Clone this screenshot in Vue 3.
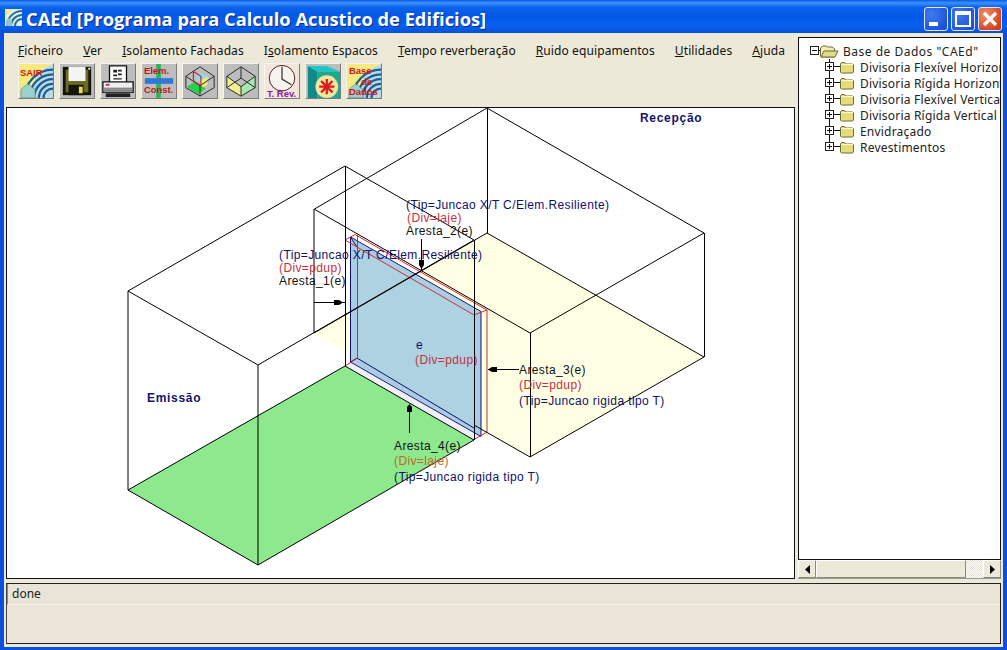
<script setup>
const menus = [
  { before: '', key: 'F', after: 'icheiro' },
  { before: '', key: 'V', after: 'er' },
  { before: '', key: 'I', after: 'solamento Fachadas' },
  { before: 'I', key: 's', after: 'olamento Espacos' },
  { before: '', key: 'T', after: 'empo reverberação' },
  { before: '', key: 'R', after: 'uido equipamentos' },
  { before: '', key: 'U', after: 'tilidades' },
  { before: '', key: 'A', after: 'juda' },
]

const treeItems = [
  'Divisoria Flexível Horizontal',
  'Divisoria Rígida Horizontal',
  'Divisoria Flexível Vertical',
  'Divisoria Rígida Vertical',
  'Envidraçado',
  'Revestimentos',
]

const labels = [
  { x: 406, y: 209, cls: 'tip', text: '(Tip=Juncao X/T C/Elem.Resiliente)' },
  { x: 407, y: 222, cls: 'div', text: '(Div=laje)' },
  { x: 406, y: 235, cls: 'ar', text: 'Aresta_2(e)' },
  { x: 279, y: 259, cls: 'tip', text: '(Tip=Juncao X/T C/Elem.Resiliente)' },
  { x: 279, y: 272, cls: 'div', text: '(Div=pdup)' },
  { x: 279, y: 285, cls: 'ar', text: 'Aresta_1(e)' },
  { x: 416, y: 349, cls: 'tip', text: 'e' },
  { x: 415, y: 364, cls: 'div', text: '(Div=pdup)' },
  { x: 519, y: 374, cls: 'ar', text: 'Aresta_3(e)' },
  { x: 519, y: 389, cls: 'div', text: '(Div=pdup)' },
  { x: 519, y: 405, cls: 'tip', text: '(Tip=Juncao rigida tipo T)' },
  { x: 394, y: 450, cls: 'ar', text: 'Aresta_4(e)' },
  { x: 394, y: 465, cls: 'div2', text: '(Div=laje)' },
  { x: 394, y: 481, cls: 'tip', text: '(Tip=Juncao rigida tipo T)' },
]
</script>

<template>
  <div class="window">
    <div class="titlebar">
      <svg class="app-icon" width="17" height="17" viewBox="0 0 17 17">
        <rect width="17" height="17" fill="#e8f0d8" />
        <path d="M0 0h8L0 8z" fill="#f2e88a" />
        <path d="M2 17A15 15 0 0 1 17 2M6 17A11 11 0 0 1 17 6M10 17A7 7 0 0 1 17 10" fill="none" stroke="#1f6fa8" stroke-width="2" />
        <path d="M1 17v-5l3-3 3 3v5z" fill="#8fc6c6" />
      </svg>
      <span class="title">CAEd [Programa para Calculo Acustico de Edificios]</span>
      <div class="caption-btns">
        <div class="cap-btn">
          <svg width="24" height="24" viewBox="0 0 24 24"><rect x="5" y="15" width="9" height="4" fill="#fff" /></svg>
        </div>
        <div class="cap-btn">
          <svg width="24" height="24" viewBox="0 0 24 24"><path d="M5 5h14v14H5z M5 5v2h14" fill="none" stroke="#fff" stroke-width="2" /></svg>
        </div>
        <div class="cap-btn close">
          <svg width="24" height="24" viewBox="0 0 24 24"><path d="M6 6l12 12M18 6L6 18" stroke="#fff" stroke-width="3.2" /></svg>
        </div>
      </div>
    </div>

    <div class="client">
      <div class="work">
        <div class="left">
          <div class="menu">
            <span v-for="m in menus" :key="m.key + m.after">{{ m.before }}<u>{{ m.key }}</u>{{ m.after }}</span>
          </div>

          <div class="toolbar">
            <!-- sair -->
            <svg class="tool" viewBox="0 0 36 36">
              <rect width="36" height="36" fill="#f4ea80" />
              <path d="M36 0V36H12C12 20 20 6 36 0z" fill="#b9dbe6" />
              <path d="M6 36A30 30 0 0 1 36 6M11 36A25 25 0 0 1 36 11M16 36A20 20 0 0 1 36 16M21 36A15 15 0 0 1 36 21M26 36A10 10 0 0 1 36 26" fill="none" stroke="#1c5f96" stroke-width="2.400" />
              <path d="M2 36V27l7-6 8 6v9z" fill="#9ccfcf" stroke="#4a7a8a" stroke-width="0.600" />
              <text x="1" y="13" class="ic-txt" fill="#d4161a">SAIR</text>
            </svg>
            <!-- disquete -->
            <svg class="tool" viewBox="0 0 36 36">
              <rect width="36" height="36" fill="#bdbdbd" />
              <path d="M3 3h30v30H3z" fill="#161608" />
              <path d="M6 6h24v24H6z" fill="#6b6b25" />
              <rect x="9" y="3" width="18" height="15" fill="#f4f4f4" />
              <rect x="9" y="22" width="16" height="11" fill="#161608" />
              <rect x="20" y="24" width="4" height="7" fill="#e8d95c" />
              <rect x="30" y="4" width="2" height="2" fill="#fff" />
            </svg>
            <!-- impressora -->
            <svg class="tool" viewBox="0 0 36 36">
              <rect width="36" height="36" fill="#bdbdbd" />
              <path d="M9 2h18v18H9z" fill="#fff" stroke="#111" stroke-width="1.400" />
              <path d="M13 6h4v3h-4zM13 11h4v2h-4zM18 6h4v2h-4zM18 10h4v2h-4zM13 15h9v1.500h-9z" fill="#222" />
              <path d="M2 19h32v11H2z" fill="#efefef" stroke="#111" stroke-width="1.400" />
              <path d="M3 25h30v5H3z" fill="#8c8c8c" />
              <path d="M5 31h26v4H5z" fill="#222" />
              <rect x="5" y="21" width="4" height="2" fill="#b03050" />
            </svg>
            <!-- elementos construtivos -->
            <svg class="tool" viewBox="0 0 36 36">
              <rect width="36" height="36" fill="#bdbdbd" />
              <rect x="15" y="0" width="5" height="36" fill="#32b25e" />
              <rect x="3" y="15" width="30" height="6" fill="#2f77d8" />
              <text x="2" y="11" class="ic-txt" fill="#c01420">Elem.</text>
              <text x="2" y="31" class="ic-txt" fill="#c01420">Const.</text>
            </svg>
            <!-- cubo colorido -->
            <svg class="tool" viewBox="0 0 36 36">
              <rect width="36" height="36" fill="#bdbdbd" />
              <path d="M18 27l8-5v-9l-8 5z" fill="#f1ea7d" />
              <path d="M18 18l8-5-8-4-4 2v9z" fill="#8fdde8" />
              <path d="M4 24l8-5 12 7-8 6z" fill="#22d24a" />
              <path d="M3 13L18 3l15 10v12L18 34 3 25zM3 13l15 10 15-10M18 23v11" fill="none" stroke="#222" stroke-width="1" />
              <path d="M11 8l8 5v10l-8-5zM11 8v10" fill="none" stroke="#d41a2a" stroke-width="1.200" />
            </svg>
            <!-- caixa -->
            <svg class="tool" viewBox="0 0 36 36">
              <rect width="36" height="36" fill="#bdbdbd" />
              <path d="M3 13l15 11v10L3 25z" fill="#f2ee90" />
              <path d="M18 24l15-11v12L18 34z" fill="#a8e8b0" />
              <path d="M3 13L18 3l15 10-15 11zM3 13v12l15 9 15-9V13M18 24v10M18 3v12M3 25l15-10 15 10" fill="none" stroke="#222" stroke-width="1" />
            </svg>
            <!-- relogio -->
            <svg class="tool" viewBox="0 0 36 36">
              <rect width="36" height="36" fill="#f2e6dc" />
              <circle cx="18" cy="15" r="13.500" fill="#f8f3ee" stroke="#4a1a1a" stroke-width="1" />
              <path d="M18 3v13l10 6" fill="none" stroke="#333" stroke-width="1.300" />
              <text x="2" y="35" class="ic-txt" fill="#8a1a9a">T. Rev.</text>
            </svg>
            <!-- ruido -->
            <svg class="tool" viewBox="0 0 36 36">
              <rect width="36" height="36" fill="#bdbdbd" />
              <path d="M2 2l10 6v28H2z" fill="#0f8a86" />
              <path d="M2 2h20l14 6H12z" fill="#19c8c8" />
              <path d="M12 8h24v28H12z" fill="#1fa88e" />
              <circle cx="22" cy="24" r="12" fill="#f0e6a0" />
              <path d="M22 16v16M14 24h16M16 18l12 12M28 18L16 30" stroke="#e01818" stroke-width="2.400" />
            </svg>
            <!-- base de dados -->
            <svg class="tool" viewBox="0 0 36 36">
              <rect width="36" height="36" fill="#f4ea80" />
              <path d="M36 0V36H12C12 20 20 6 36 0z" fill="#b9dbe6" />
              <path d="M6 36A30 30 0 0 1 36 6M11 36A25 25 0 0 1 36 11M16 36A20 20 0 0 1 36 16M21 36A15 15 0 0 1 36 21M26 36A10 10 0 0 1 36 26" fill="none" stroke="#1c5f96" stroke-width="2.400" />
              <path d="M2 36V27l7-6 8 6v9z" fill="#9ccfcf" stroke="#4a7a8a" stroke-width="0.600" />
              <text x="2" y="11" class="ic-txt" fill="#c8141a">Base</text>
              <text x="15" y="22" class="ic-txt" fill="#c8141a">de</text>
              <text x="2" y="33" class="ic-txt" fill="#c8141a">Dados</text>
            </svg>
          </div>

          <div class="canvas">
            <svg class="diagram" viewBox="7 108 787 470" width="787" height="470">
              <polygon points="314,333 487,233 704,357 530,457" fill="#ffffe3" />
              <polygon points="128,490 258,565 474,440 345,366" fill="#8ee88e" />

              <!-- parede -->
              <polygon points="345,366 474,440 481,436 350,361" fill="#f0f0fb" />
              <polygon points="350,237 481,312 481,436 350,361" fill="#a9cde2" />
              <polygon points="357,247 474,314 474,428 357,358" fill="#add3e3" />
              <g fill="none" stroke="#10106a">
                <path d="M350.500 237V362L481 436.500V311.500z" />
                <path d="M350.500 362L357 358L474 428M474.500 316V439" />
                <path d="M350.500 237L357 247" />
              </g>
              <g fill="none" stroke="#d02c38">
                <path d="M345 240L355 234.500L487 310V432L475 439" />
                <path d="M345 240L357 247L474 315L487 310" />
                <path d="M357.500 235V358L345 366" />
              </g>

              <g fill="none" stroke="#000">
                <path d="M128 291L345 166L474 240" />
                <path d="M128 291L258 365L474 240" />
                <path d="M128 291V490L258 565V365" />
                <path d="M128 490L345 366L474 440L258 565" />
                <path d="M345.500 166V366" />
                <path d="M474.500 240V440" />
                <path d="M314.500 209L487 108L704 233L530 333L314 209V333" />
                <path d="M487.500 108V233" />
                <path d="M314 333L487 233L704 357L530 457L474 425" />
                <path d="M530.500 333V457" />
                <path d="M704.500 233V357" />
              </g>

              <!-- setas -->
              <g stroke="#000">
                <path d="M314 302.500H345M421.500 239V270M488 369.500H519M409.500 433V405" fill="none" />
              </g>
              <g fill="#000">
                <path d="M334 300h5l4 2.500-4 2.500h-5z" />
                <path d="M419 260h5v5l-2.500 4-2.500-4z" />
                <path d="M492 367h5v5h-5l-4-2.500z" />
                <path d="M407 412v-5l2.500-3 2.500 3v5z" />
              </g>

              <text v-for="l in labels" :key="l.x + '-' + l.y" :x="l.x" :y="l.y" class="lbl" :class="l.cls">{{ l.text }}</text>
              <text x="147" y="402" class="room">Emissão</text>
              <text x="640" y="122" class="room">Recepção</text>
            </svg>
          </div>
        </div>

        <div class="right">
          <div class="tree">
            <div class="tree-row root">
              <svg width="36" height="16" viewBox="0 0 36 16">
                <rect x="6.500" y="3.500" width="8" height="8" fill="#fff" stroke="#222" />
                <path d="M8 7.500h5M14 7.500h6" stroke="#111" />
                <path d="M16.500 12V5l2-2h4l1 1h5l2 2v8H17z" fill="#f2ecb0" stroke="#6a6a3a" />
                <path d="M17 14l3-6h14l-3 6z" fill="#e3da8a" stroke="#6a6a3a" />
              </svg>
              <span>Base de Dados "CAEd"</span>
            </div>
            <div v-for="(item, i) in treeItems" :key="item" class="tree-row">
              <svg width="36" height="16" viewBox="0 0 36 16">
                <path :d="i === treeItems.length - 1 ? 'M5.500 0V8' : 'M5.500 0V16'" stroke="#111" />
                <rect x="1.500" y="3.500" width="8" height="8" fill="#fff" stroke="#222" />
                <path d="M3 7.500h5M5.500 5v5M10 7.500h6" stroke="#111" />
                <path d="M16.500 5l1-1.500h3l1 1.500h7l1 1v7l-1 1h-11l-1-1z" fill="#e6dc78" stroke="#6a6a3a" />
                <path d="M17 5.500h12" stroke="#fff8c8" />
              </svg>
              <span>{{ item }}</span>
            </div>
          </div>
          <div class="hscroll">
            <div class="sb-btn"><svg width="7" height="9" viewBox="0 0 7 9"><path d="M6 0v9L1 4.500z" fill="#000" /></svg></div>
            <div class="sb-thumb"></div>
            <div class="sb-track"></div>
            <div class="sb-btn"><svg width="7" height="9" viewBox="0 0 7 9"><path d="M1 0v9l5-4.500z" fill="#000" /></svg></div>
          </div>
        </div>
      </div>

      <div class="status">
        <div class="status-top">done</div>
        <div class="status-bottom"></div>
      </div>
    </div>
  </div>
</template>

<style>
html,
body {
  margin: 0;
  overflow: hidden;
}
</style>

<style scoped>
.window {
  width: 1007px;
  height: 650px;
  box-sizing: border-box;
  display: flex;
  flex-direction: column;
  background: #0a50dc;
  overflow: hidden;
}

.titlebar {
  height: 33px;
  flex: none;
  display: flex;
  align-items: center;
  padding: 0 5px 0 5px;
  background: linear-gradient(#0a5ae6 0, #3c92ff 3px, #0c62ea 7px, #0058e6 16px, #0a60ee 26px, #0450d8 33px);
}

.app-icon {
  flex: none;
  margin-top: 2px;
}

.title {
  margin-left: 4px;
  margin-top: 4px;
  color: #fff;
  font: bold 18.3px "Open Sans", sans-serif;
  text-shadow: 1px 1px 0 #0a2a90;
  white-space: nowrap;
}

.caption-btns {
  margin-left: auto;
  display: flex;
  gap: 3px;
  margin-top: 4px;
}

.cap-btn {
  width: 24px;
  height: 24px;
  box-sizing: border-box;
  border: 1px solid #dfe8ff;
  border-radius: 3px;
  background: radial-gradient(circle at 30% 30%, #3f7cf0, #1f50d8 80%);
  display: flex;
  align-items: center;
  justify-content: center;
}

.cap-btn svg {
  flex: none;
}

.cap-btn.close {
  background: radial-gradient(circle at 30% 30%, #f0906a, #d43c18 80%);
}

.client {
  flex: none;
  height: 614px;
  margin: 0 4px;
  padding: 4px 2px 3px;
  box-sizing: border-box;
  background: #ece9d8;
  display: flex;
  flex-direction: column;
  gap: 4px;
}

.work {
  flex: 1;
  min-height: 0;
  display: flex;
  gap: 3px;
}

.left {
  width: 789px;
  flex: none;
  display: flex;
  flex-direction: column;
}

.menu {
  height: 21px;
  padding: 5px 0 0 12px;
  display: flex;
  gap: 20px;
  font: 12px "Noto Sans", sans-serif;
  letter-spacing: 0.1px;
  color: #111;
  white-space: nowrap;
}

.toolbar {
  display: flex;
  gap: 5px;
  padding: 0 0 8px 12px;
}

.tool {
  width: 36px;
  height: 36px;
  box-sizing: border-box;
  border: 1px solid;
  border-color: #f4f4f4 #7a7a7a #7a7a7a #f4f4f4;
  flex: none;
}

.ic-txt {
  font: bold 10px "Liberation Sans", sans-serif;
}

.canvas {
  flex: 1;
  min-height: 0;
  border: 1px solid #111;
  background: #fff;
}

.diagram {
  display: block;
}

.lbl {
  font: 12px "Liberation Sans", sans-serif;
  letter-spacing: 0.38px;
}

.tip {
  fill: #10106a;
}

.div {
  fill: #c8303c;
}

.div2 {
  fill: #c06a20;
}

.ar {
  fill: #111;
}

.room {
  font: bold 12px "Liberation Sans", sans-serif;
  letter-spacing: 0.7px;
  fill: #14146a;
}

.right {
  flex: none;
  width: 203px;
  display: flex;
  flex-direction: column;
}

.tree {
  flex: 1;
  min-height: 0;
  border: 1px solid #111;
  background: #fff;
  padding-top: 5px;
  overflow: hidden;
  font: 12px "Noto Sans", sans-serif;
  letter-spacing: 0.2px;
  color: #222;
}

.tree-row {
  height: 16px;
  display: flex;
  align-items: center;
  white-space: nowrap;
  padding-left: 25px;
}

.tree-row.root {
  padding-left: 5px;
  letter-spacing: 0.5px;
}

.tree-row svg {
  flex: none;
}

.tree-row.root span {
  margin-left: 3px;
}

.hscroll {
  flex: none;
  height: 18px;
  display: flex;
  background: #ece9d8;
  border-bottom: 1px solid #9a9a90;
}

.sb-btn {
  width: 18px;
  flex: none;
  box-sizing: border-box;
  border: 1px solid;
  border-color: #fff #8a8a80 #8a8a80 #fff;
  display: flex;
  align-items: center;
  justify-content: center;
}

.sb-thumb {
  width: 150px;
  flex: none;
  box-sizing: border-box;
  border: 1px solid;
  border-color: #fff #8a8a80 #8a8a80 #fff;
}

.sb-track {
  flex: 1;
  background: repeating-conic-gradient(#fff 0 25%, #e4e1d0 0 50%) 0 0 / 2px 2px;
}

.status {
  flex: none;
  height: 61px;
  box-sizing: border-box;
  border: 1px solid #222;
  border-left-color: #444;
  background: #ebe6d8;
  display: flex;
  flex-direction: column;
}

.status-top {
  height: 20px;
  flex: none;
  padding-left: 4px;
  background: #e8e5d6;
  border-bottom: 1px solid #f6f2e4;
  border-left: 1px solid #888;
  font: 12px/20px "Noto Sans", sans-serif;
  color: #222;
}

.status-bottom {
  flex: 1;
}
</style>
